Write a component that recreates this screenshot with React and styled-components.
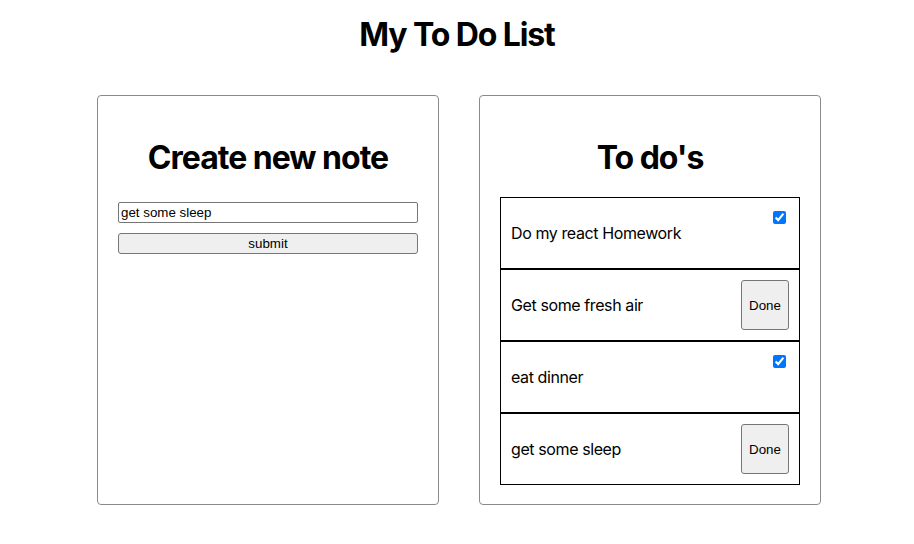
import React, { useState } from "react";
import styled, { createGlobalStyle } from "styled-components";

const GlobalStyle = createGlobalStyle`
  body {
    margin: 0;
    font-family: Inter, "Noto Sans", sans-serif;
    color: #000;
    background: #fff;
  }
`;

const Page = styled.div`
  display: flex;
  flex-direction: column;
  align-items: center;
  padding-top: 15px;
`;

const Title = styled.h1`
  margin: 0 0 41px;
  font-size: 32px;
  font-weight: 700;
  line-height: 39px;
  letter-spacing: -1.1px;
`;

const Columns = styled.div`
  display: flex;
  justify-content: center;
  gap: 40px;
  padding-left: 4px;
`;

const Card = styled.div`
  box-sizing: border-box;
  width: 342px;
  height: 410px;
  padding: 0 20px;
  border: 1px solid #8a8a8a;
  border-radius: 4px;
`;

const CardTitle = styled.h2`
  margin: 42px 0 20px;
  font-size: 32px;
  font-weight: 700;
  line-height: 39px;
  letter-spacing: -1px;
  text-align: center;
`;

const Form = styled.form`
  display: flex;
  flex-direction: column;
  gap: 10px;
  padding-top: 5px;
`;

const TextInput = styled.input`
  box-sizing: border-box;
  width: 100%;
  height: 21px;
  margin: 0;
  padding: 1px 2px;
  font-family: "Liberation Sans", Arial, sans-serif;
  font-size: 13.33px;
  border: 1px solid #767676;
  border-radius: 2px;
`;

const SubmitButton = styled.button`
  box-sizing: border-box;
  width: 100%;
  height: 21px;
  margin: 0;
  font-family: "Liberation Sans", Arial, sans-serif;
  font-size: 13.33px;
  background: #efefef;
  border: 1px solid #767676;
  border-radius: 3px;
`;

const List = styled.div`
  display: flex;
  flex-direction: column;
`;

const Item = styled.div`
  box-sizing: border-box;
  height: 72px;
  padding: 10px;
  display: flex;
  align-items: center;
  justify-content: space-between;
  border: 1px solid #000;
  font-size: 16px;
  letter-spacing: -0.4px;
`;

const Check = styled.input`
  align-self: flex-start;
  width: 13px;
  height: 13px;
  margin: 3px 3px 3px 4px;
`;

const DoneButton = styled.button`
  box-sizing: border-box;
  width: 48px;
  height: 50px;
  margin: 0;
  padding: 0;
  font-family: "Liberation Sans", Arial, sans-serif;
  font-size: 13.33px;
  letter-spacing: 0;
  background: #efefef;
  border: 1px solid #767676;
  border-radius: 3px;
`;

const todos = [
  { text: "Do my react Homework", done: true },
  { text: "Get some fresh air", done: false },
  { text: "eat dinner", done: true },
  { text: "get some sleep", done: false },
];

export default function App() {
  const [note, setNote] = useState("get some sleep");

  return (
    <Page>
      <GlobalStyle />
      <Title>My To Do List</Title>
      <Columns>
        <Card>
          <CardTitle>Create new note</CardTitle>
          <Form onSubmit={(e) => e.preventDefault()}>
            <TextInput value={note} onChange={(e) => setNote(e.target.value)} />
            <SubmitButton type="submit">submit</SubmitButton>
          </Form>
        </Card>
        <Card>
          <CardTitle>To do's</CardTitle>
          <List>
            {todos.map((t, i) => (
              <Item key={i}>
                <span>{t.text}</span>
                {t.done ? (
                  <Check type="checkbox" checked readOnly />
                ) : (
                  <DoneButton>Done</DoneButton>
                )}
              </Item>
            ))}
          </List>
        </Card>
      </Columns>
    </Page>
  );
}
